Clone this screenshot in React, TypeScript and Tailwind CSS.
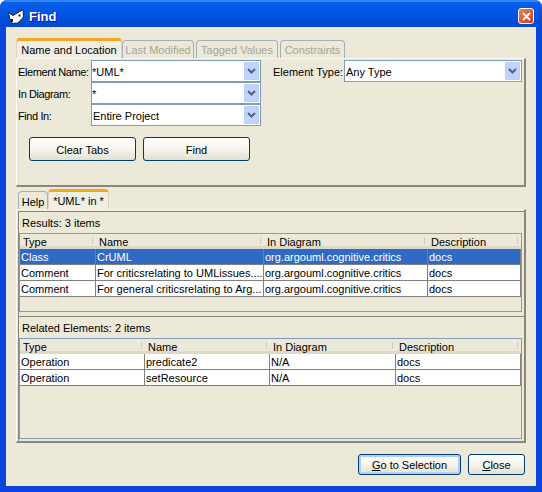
import React from 'react';

const FONT = 'font-["Liberation_Sans",Arial,sans-serif] text-[11px] leading-none text-black';

const RESULT_COLS = ['w-[76px]', 'w-[168px]', 'w-[164px]', 'w-[93px]'];
const RELATED_COLS = ['w-[125px]', 'w-[125px]', 'w-[126px]', 'w-[125px]'];
const HEADERS = ['Type', 'Name', 'In Diagram', 'Description'];

const RESULTS = [
  ['Class', 'CrUML', 'org.argouml.cognitive.critics', 'docs'],
  ['Comment', 'For criticsrelating to UMLissues....', 'org.argouml.cognitive.critics', 'docs'],
  ['Comment', 'For general criticsrelating to Arg...', 'org.argouml.cognitive.critics', 'docs'],
];

const RELATED = [
  ['Operation', 'predicate2', 'N/A', 'docs'],
  ['Operation', 'setResource', 'N/A', 'docs'],
];

const Chevron = () => (
  <svg width="9" height="6" viewBox="0 0 9 6" fill="none" stroke="#4d6185" strokeWidth="2">
    <path d="M1 1l3.5 3.5L8 1" />
  </svg>
);

const Combo = ({ value, className }: { value: string; className: string }) => (
  <div className={`flex h-[22px] items-center border border-[#7f9db9] bg-white pr-px ${className}`}>
    <span className="flex-1 truncate pt-[3px]">{value}</span>
    <span className="flex h-[18px] w-[15px] items-center justify-center rounded-[1px] border border-[#bcd0f5] bg-[#c1d3fb]">
      <Chevron />
    </span>
  </div>
);

const Field = ({ label, value, editable }: { label: string; value: string; editable?: boolean }) => (
  <div className="flex items-center">
    <span className="w-[73px] whitespace-nowrap pt-[3px] tracking-[-0.4px]">{label}</span>
    <Combo value={value} className={`w-[170px] ${editable ? '' : 'pl-px'}`} />
  </div>
);

const XpButton = ({ className, children }: { className: string; children: React.ReactNode }) => (
  <div className={`flex items-center justify-center rounded-[3px] border border-[#003c74] bg-gradient-to-b from-white via-[#f6f5ef] to-[#e3e0d2] pt-px ${className}`}>
    {children}
  </div>
);

const Tab = ({ label, active, disabled, className }: { label: string; active?: boolean; disabled?: boolean; className: string }) => (
  <div
    className={`flex items-center justify-center rounded-t-[4px] ${className} ${
      active
        ? 'border-x border-t-[3px] border-x-[#d8d5c4] border-t-[#f5a623] bg-[#f1efe4]'
        : 'border-x border-t border-[#9fb1bf] bg-[#ece9d8]'
    } ${disabled ? 'text-[#a5a597]' : ''}`}
  >
    {label}
  </div>
);

const ResultTable = ({ cols, rows, selected, height }: { cols: string[]; rows: string[][]; selected?: number; height: string }) => (
  <div className={`mr-[2px] border border-[#7f9db9] ${height}`}>
    <div className="flex h-[15px]">
      {HEADERS.map((h, i) => (
        <div key={h} className={`relative flex items-center border-b-[3px] border-[#dcd9c7] pl-[3px] pt-[5px] ${cols[i]}`}>
          {h}
          <span className="absolute right-[3px] top-[3px] h-[7px] w-px bg-[#cfccb9]" />
        </div>
      ))}
    </div>
    {rows.map((row, r) => (
      <div key={r} className={`flex h-[16px] border-b border-[#808080] ${r === selected ? 'bg-[#316ac5] text-white' : 'bg-white'}`}>
        {row.map((cell, c) => (
          <div key={c} className={`flex items-center overflow-hidden whitespace-nowrap border-r border-[#808080] pl-px pt-[2px] ${cols[c]}`}>
            {cell}
          </div>
        ))}
      </div>
    ))}
  </div>
);

export default function App() {
  return (
    <div className={`flex h-[492px] w-[542px] flex-col overflow-hidden rounded-t-[7px] bg-[#0a45dc] ${FONT}`}>
      {/* Title bar */}
      <div className="flex h-[27px] shrink-0 items-center border-t-2 border-[#2f86f5] bg-gradient-to-b from-[#0a5fe8] via-[#0054e3] to-[#0348d0] pl-[8px] pr-[8px] pt-[3px]">
        <svg width="16" height="15" viewBox="0 0 16 15">
          <path d="M0.5 3.5L5 6.5 15 0.5 15.5 8 10 14 4 14.5 1.5 9z" fill="#fff" stroke="#1a1a1a" strokeWidth="1" />
          <path d="M10.5 5.5h2v2h-2zM3 10h2v3H3z" fill="#1a1a1a" />
        </svg>
        <span className="ml-[5px] flex-1 font-['Liberation_Sans'] text-[13px] font-bold text-white [text-shadow:1px_1px_#0f1089]">Find</span>
        <div className="flex h-[16px] w-[16px] items-center justify-center rounded-[3px] border border-white bg-gradient-to-br from-[#e9845f] to-[#c8370f]">
          <svg width="9" height="9" viewBox="0 0 9 9" stroke="#fff" strokeWidth="2">
            <path d="M1 1l7 7M8 1l-7 7" />
          </svg>
        </div>
      </div>

      {/* Dialog body */}
      <div className="mx-[6px] flex h-[459px] flex-col bg-[#ece9d8] px-[10px] pt-[11px]">
        <div className="flex h-[20px] items-end">
          <Tab label="Name and Location" active className="h-[20px] w-[106px] pt-px" />
          <Tab label="Last Modified" disabled className="h-[18px] w-[72px] pt-px" />
          <Tab label="Tagged Values" disabled className="ml-[2px] h-[18px] w-[82px] pt-px" />
          <Tab label="Constraints" disabled className="ml-[2px] h-[18px] w-[65px] pt-px" />
        </div>

        <div className="flex h-[129px] flex-col border-b-2 border-l border-r-2 border-t border-b-[#8a8778] border-l-white border-r-[#8a8778] border-t-[#f8f7f1] pl-px pt-px">
          <div className="flex">
            <div className="flex flex-col">
              <Field label="Element Name:" value="*UML*" editable />
              <Field label="In Diagram:" value="*" editable />
              <Field label="Find In:" value="Entire Project" />
            </div>
            <div className="ml-[12px] flex h-[22px] items-center">
              <span className="w-[71px] whitespace-nowrap pt-[3px]">Element Type:</span>
              <Combo value="Any Type" className="w-[178px] pl-px" />
            </div>
          </div>
          <div className="ml-[11px] mt-[11px] flex gap-[7px]">
            <XpButton className="h-[24px] w-[107px]"><span className="pt-[2px]">Clear Tabs</span></XpButton>
            <XpButton className="h-[24px] w-[107px]"><span className="pt-[2px]">Find</span></XpButton>
          </div>
        </div>

        <div className="mt-[2px] flex h-[20px] items-end pl-[2px]">
          <Tab label="Help" className="h-[18px] w-[30px] pt-[3px]" />
          <Tab label="*UML* in *" active className="h-[20px] w-[61px] pt-px" />
        </div>

        <div className="flex h-[234px] flex-col border-b-2 border-l border-r-2 border-t border-b-[#8a8778] border-l-white border-r-[#8a8778] border-t-[#f8f7f1] pl-px pt-px">
          <div className="flex h-[105px] flex-col border-l border-t border-[#8a8778]">
            <div className="flex h-[21px] items-center pl-[3px] pt-px">Results: 3 items</div>
            <ResultTable cols={RESULT_COLS} rows={RESULTS} selected={0} height="h-[79px]" />
          </div>
          <div className="flex h-[125px] flex-col border-l border-t border-[#8a8778]">
            <div className="flex h-[21px] items-center pl-[3px] pt-px">Related Elements: 2 items</div>
            <ResultTable cols={RELATED_COLS} rows={RELATED} height="h-[101px]" />
          </div>
        </div>

        <div className="mt-[11px] flex justify-end gap-[7px] pr-px">
          <XpButton className="h-[21px] w-[103px] shadow-[inset_0_0_0_2px_#b5cdf0]">
            <span><u>G</u>o to Selection</span>
          </XpButton>
          <XpButton className="h-[21px] w-[57px]">
            <span><u>C</u>lose</span>
          </XpButton>
        </div>
      </div>
    </div>
  );
}
